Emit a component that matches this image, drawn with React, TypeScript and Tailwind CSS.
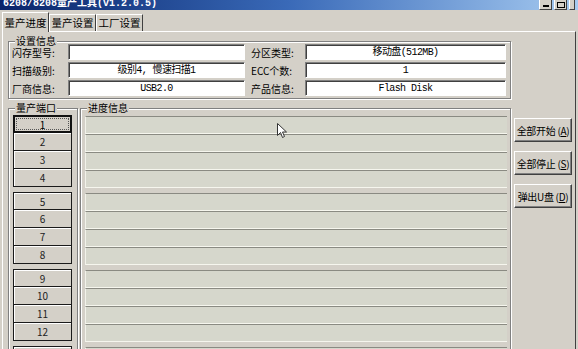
import React from "react";

const settings = [
  { label: "闪存型号:", value: "", label2: "分区类型:", value2: "移动盘(512MB)" },
  { label: "扫描级别:", value: "级别4, 慢速扫描1", label2: "ECC个数:", value2: "1" },
  { label: "厂商信息:", value: "USB2.0", label2: "产品信息:", value2: "Flash Disk" },
];

const portGroups = [
  [1, 2, 3, 4],
  [5, 6, 7, 8],
  [9, 10, 11, 12],
  [13, 14, 15, 16],
];

function Legend({ text }: { text: string }) {
  return (
    <span className="absolute -top-[7px] left-[6px] bg-[#d4d0c8] px-[1px] text-[10px] leading-[12px] text-black">
      {text}
    </span>
  );
}

function Field({ value }: { value: string }) {
  return (
    <div className="flex h-[16px] items-center justify-center border-t border-l border-t-[#808080] border-l-[#808080] border-b border-r border-b-white border-r-white bg-white shadow-[inset_1px_1px_0_#404040] font-['Liberation_Mono','Noto_Sans_CJK_SC',monospace] text-[10px] tracking-[-0.6px] text-black">
      {value}
    </div>
  );
}

function PortButton({ n, first, focused }: { n: number; first: boolean; focused?: boolean }) {
  if (focused) {
    return (
      <div className="flex h-[18px] w-[59px] items-center justify-center border-2 border-[#111] bg-[#d4d0c8] p-[1px]">
        <div className="flex h-full w-full items-center justify-center border border-dotted border-[#555] text-[10px] text-black">
          {n}
        </div>
      </div>
    );
  }
  return (
    <div
      className={`flex h-[18px] w-[59px] items-center justify-center border-x border-b border-[#1a1a1a] bg-[#d4d0c8] shadow-[inset_1px_1px_0_#fff] text-[10px] text-[#222] ${
        first ? "border-t" : ""
      }`}
    >
      {n}
    </div>
  );
}

function ActionButton({ text, hot }: { text: string; hot: string }) {
  return (
    <div className="flex h-[24px] w-[58px] items-center justify-center border border-t-white border-l-white border-r-[#404040] border-b-[#404040] bg-[#d4d0c8] shadow-[inset_-1px_-1px_0_#808080] text-[10px] tracking-[-0.3px] text-black">
      {text} (<span className="underline">{hot}</span>)
    </div>
  );
}

export default function App() {
  return (
    <div className="relative h-[349px] w-[578px] overflow-hidden bg-[#d4d0c8] font-['Noto_Sans_CJK_SC','Liberation_Sans',sans-serif]">
      {/* Title bar, cut off at the top */}
      <div className="flex h-[10px] items-end justify-between overflow-hidden bg-gradient-to-r from-[#0a246a] via-[#3a6ab8] to-[#a6caf0] pr-[3px]">
        <span className="pl-[3px] font-['Liberation_Mono','Noto_Sans_CJK_SC',monospace] text-[10px] font-bold leading-[13px] text-white">
          6208/8208量产工具(v1.2.0.5)
        </span>
        <div className="flex items-end gap-[2px]">
          <div className="flex h-[12px] w-[13px] items-end justify-center border border-t-white border-l-white border-r-[#404040] border-b-[#404040] bg-[#d4d0c8] pb-[2px]">
            <div className="h-[2px] w-[6px] bg-black" />
          </div>
          <div className="flex h-[12px] w-[13px] items-end justify-center border border-t-white border-l-white border-r-[#404040] border-b-[#404040] bg-[#d4d0c8] pb-[1px]">
            <div className="h-[6px] w-[8px] border border-black" />
          </div>
          <div className="h-[12px] w-[6px] border border-t-white border-l-white border-[#404040] bg-[#d4d0c8]" />
        </div>
      </div>

      {/* Tabs */}
      <div className="flex h-[21px] items-end pl-[2px]">
        <div className="relative z-10 -mb-px flex h-[20px] w-[47px] items-center justify-center border-t border-l border-white border-r border-r-[#404040] bg-[#d4d0c8] text-[10.5px] text-black">
          量产进度
        </div>
        <div className="flex h-[17px] w-[47px] items-center justify-center border-t border-l border-white border-r border-r-[#404040] text-[10.5px] text-black">
          量产设置
        </div>
        <div className="flex h-[17px] w-[47px] items-center justify-center border-t border-l border-white border-r border-r-[#404040] text-[10.5px] text-black">
          工厂设置
        </div>
      </div>

      {/* Tab panel */}
      <div className="ml-[2px] h-[318px] w-[574px] border-t border-l border-white border-r border-r-[#404040]">
        {/* 设置信息 */}
        <div className="relative ml-[5px] mt-[9px] h-[58px] w-[503px] border border-[#808080] shadow-[1px_1px_0_#fff,inset_1px_1px_0_#fff]">
          <Legend text="设置信息" />
          <div className="flex flex-col gap-[2px] pl-[3px] pt-[2px]">
            {settings.map((row) => (
              <div key={row.label} className="flex h-[16px] items-center">
                <span className="w-[56px] text-[10px] text-black">{row.label}</span>
                <div className="w-[177px]">
                  <Field value={row.value} />
                </div>
                <span className="w-[60px] pl-[6px] text-[10px] text-black">{row.label2}</span>
                <div className="w-[201px]">
                  <Field value={row.value2} />
                </div>
              </div>
            ))}
          </div>
        </div>

        <div className="mt-[9px] flex items-start">
          {/* 量产端口 */}
          <div className="relative ml-[5px] h-[260px] w-[70px] border border-[#808080] shadow-[1px_1px_0_#fff,inset_1px_1px_0_#fff]">
            <Legend text="量产端口" />
            <div className="flex flex-col gap-[5px] pl-[4px] pt-[6px]">
              {portGroups.map((group) => (
                <div key={group[0]} className="flex flex-col">
                  {group.map((n, i) => (
                    <PortButton key={n} n={n} first={i === 0} focused={n === 1} />
                  ))}
                </div>
              ))}
            </div>
          </div>

          {/* 进度信息 */}
          <div className="relative ml-[2px] h-[260px] w-[431px] border border-[#808080] shadow-[1px_1px_0_#fff,inset_1px_1px_0_#fff]">
            <Legend text="进度信息" />
            <div className="flex flex-col gap-[5px] pl-[4px] pt-[7px]">
              {portGroups.map((group) => (
                <div key={group[0]} className="flex flex-col">
                  {group.map((n) => (
                    <div
                      key={n}
                      className="h-[18px] w-[422px] border-t border-l border-t-[#8a8a82] border-l-[#f2f2ea] border-b border-b-[#f6f6ee] bg-[#d6d7cc]"
                    />
                  ))}
                </div>
              ))}
            </div>
          </div>

          {/* Actions */}
          <div className="ml-[3px] mt-[10px] flex flex-col gap-[9px]">
            <ActionButton text="全部开始" hot="A" />
            <ActionButton text="全部停止" hot="S" />
            <ActionButton text="弹出U盘" hot="D" />
          </div>
        </div>
      </div>

      {/* Mouse pointer */}
      <svg className="absolute left-[277px] top-[123px]" width="12" height="17" viewBox="0 0 12 17">
        <path d="M0.5 0.5 L0.5 12.5 L3.5 9.5 L5.5 14.5 L7.5 13.5 L5.5 9 L9.5 9 Z" fill="#fff" stroke="#333" strokeWidth="1" />
      </svg>
    </div>
  );
}
